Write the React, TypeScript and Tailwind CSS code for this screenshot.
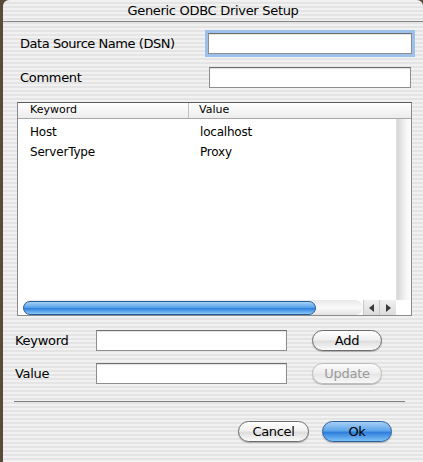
import React from 'react';

const font = { fontFamily: '"DejaVu Sans", "Liberation Sans", sans-serif' };

const Field: React.FC<{ className?: string }> = ({ className = '' }) => (
    <div className={`h-[21px] bg-white border border-[#8e8e8e] border-t-[#6f6f6f] shadow-[inset_0_1px_1px_rgba(0,0,0,0.12)] ${className}`} />
);

const AquaButton: React.FC<{ label: string; variant?: 'default' | 'primary' | 'disabled'; className?: string }> = ({ label, variant = 'default', className = '' }) => {
    const look =
        variant === 'primary'
            ? 'bg-[linear-gradient(#a6d0f5_0%,#5fa6ec_45%,#2f7fdc_55%,#7cc1f7_100%)] border-[#2e5f99] text-black'
            : variant === 'disabled'
            ? 'bg-[linear-gradient(#fbfbfb_0%,#efefef_45%,#e6e6e6_55%,#f8f8f8_100%)] border-[#bdbdbd] text-[#9a9a9a]'
            : 'bg-[linear-gradient(#ffffff_0%,#f0f0f0_45%,#dedede_55%,#fafafa_100%)] border-[#6c6c6c] text-black';
    return (
        <div className={`h-[21px] w-[70px] rounded-full border flex items-center justify-center text-[13px] tracking-[-0.3px] shadow-[0_1px_1px_rgba(0,0,0,0.25)] ${look} ${className}`}>
            {label}
        </div>
    );
};

export default function App() {
    return (
        <div className="w-[423px] h-[462px] bg-[#5a4a3a] flex overflow-hidden" style={font}>
            <div className="ml-[3px] flex-1 flex flex-col rounded-tl-[6px] rounded-tr-[6px] bg-[repeating-linear-gradient(#f1f1f1_0px,#f1f1f1_2px,#e4e4e4_2px,#e4e4e4_4px)] text-black">
                {/* title bar */}
                <div className="h-[22px] flex items-center justify-center border-b border-[#858585] text-[13px] tracking-[-0.3px]">
                    Generic ODBC Driver Setup
                </div>

                {/* DSN */}
                <div className="mt-[11px] flex items-center">
                    <div className="pl-[17px] w-[205px] text-[13px] tracking-[-0.45px]">Data Source Name (DSN)</div>
                    <Field className="w-[204px] outline-[3px] outline-[#9cc2ec]" />
                </div>

                {/* Comment */}
                <div className="mt-[13px] flex items-center">
                    <div className="pl-[17px] w-[206px] text-[13px] tracking-[-0.3px]">Comment</div>
                    <Field className="w-[202px]" />
                </div>

                {/* table */}
                <div className="mt-[14px] ml-[14px] w-[395px] h-[214px] border border-[#8a8a8a] border-t-[#5c5c5c] bg-white flex flex-col">
                    <div className="h-[16px] flex text-[11px] bg-[linear-gradient(#ffffff,#ececec)] border-b border-[#a8a8a8]">
                        <div className="w-[171px] pl-[12px] border-r border-[#c0c0c0] flex items-center">Keyword</div>
                        <div className="flex-1 pl-[10px] flex items-center">Value</div>
                    </div>
                    <div className="flex-1 flex">
                        <div className="flex-1 text-[12px] pt-[3px] tracking-[-0.2px]">
                            <div className="h-[20px] flex items-center">
                                <div className="w-[171px] pl-[12px]">Host</div>
                                <div className="pl-[11px]">localhost</div>
                            </div>
                            <div className="h-[20px] flex items-center">
                                <div className="w-[171px] pl-[12px]">ServerType</div>
                                <div className="pl-[11px]">Proxy</div>
                            </div>
                        </div>
                        <div className="w-[15px] bg-[linear-gradient(90deg,#d6d6d6,#f4f4f4_60%,#ffffff)] border-l border-[#e0e0e0]" />
                    </div>
                    {/* horizontal scrollbar */}
                    <div className="h-[15px] flex items-center">
                        <div className="w-[5px]" />
                        <div className="w-[340px] h-[15px] rounded-full bg-[linear-gradient(#e8e8e8,#fafafa_50%,#e2e2e2)] flex items-center">
                            <div className="w-[293px] h-[14px] rounded-full border border-[#2a5d9c] bg-[linear-gradient(#a8d2f6_0%,#5ba4ec_45%,#2f82de_55%,#8cc8f8_100%)]" />
                        </div>
                        <div className="w-[16px] h-[15px] flex items-center justify-center bg-[linear-gradient(#f0f0f0,#dcdcdc)] border-l border-[#c8c8c8]">
                            <svg width="6" height="8" viewBox="0 0 6 8"><path d="M5 0 L0 4 L5 8 Z" fill="#3a3a3a" /></svg>
                        </div>
                        <div className="w-[17px] h-[15px] flex items-center justify-center bg-[linear-gradient(#f0f0f0,#dcdcdc)] border-l border-[#c8c8c8]">
                            <svg width="6" height="8" viewBox="0 0 6 8"><path d="M1 0 L6 4 L1 8 Z" fill="#3a3a3a" /></svg>
                        </div>
                        <div className="flex-1 h-[15px] bg-white" />
                    </div>
                </div>

                {/* Keyword */}
                <div className="mt-[14px] flex items-center">
                    <div className="pl-[12px] w-[93px] text-[13px] tracking-[-0.3px]">Keyword</div>
                    <Field className="w-[191px]" />
                    <AquaButton label="Add" className="ml-[25px]" />
                </div>

                {/* Value */}
                <div className="mt-[12px] flex items-center">
                    <div className="pl-[12px] w-[93px] text-[13px] tracking-[-0.3px]">Value</div>
                    <Field className="w-[191px]" />
                    <AquaButton label="Update" variant="disabled" className="ml-[25px]" />
                </div>

                <div className="mt-[17px] ml-[11px] w-[391px] border-t border-[#7e7e7e]" />

                <div className="mt-[19px] flex justify-end pr-[31px] gap-[13px]">
                    <AquaButton label="Cancel" className="w-[71px]" />
                    <AquaButton label="Ok" variant="primary" />
                </div>
            </div>
        </div>
    );
}
